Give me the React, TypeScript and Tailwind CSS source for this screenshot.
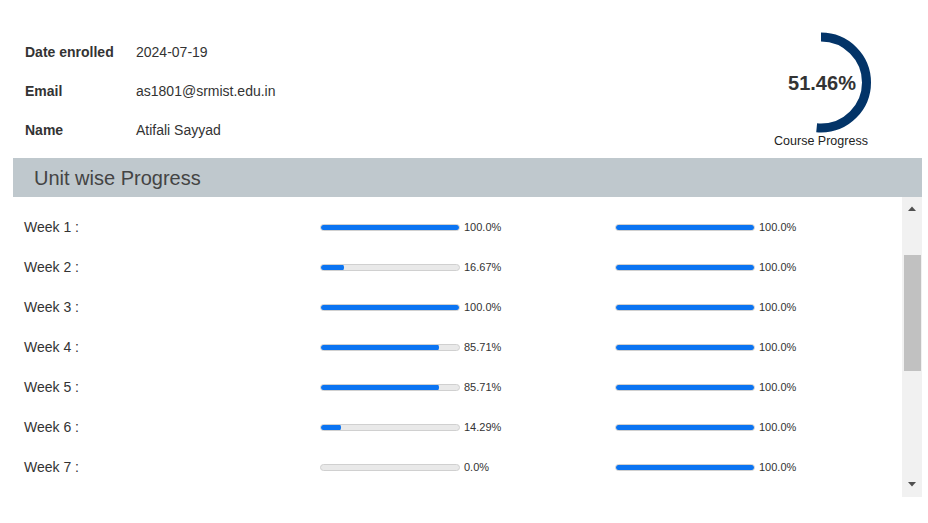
const info = [
  { label: 'Date enrolled', value: '2024-07-19' },
  { label: 'Email', value: 'as1801@srmist.edu.in' },
  { label: 'Name', value: 'Atifali Sayyad' },
];

const weeks = [
  { name: 'Week 1 :', a: 100, b: 100, at: '100.0%', bt: '100.0%' },
  { name: 'Week 2 :', a: 16.67, b: 100, at: '16.67%', bt: '100.0%' },
  { name: 'Week 3 :', a: 100, b: 100, at: '100.0%', bt: '100.0%' },
  { name: 'Week 4 :', a: 85.71, b: 100, at: '85.71%', bt: '100.0%' },
  { name: 'Week 5 :', a: 85.71, b: 100, at: '85.71%', bt: '100.0%' },
  { name: 'Week 6 :', a: 14.29, b: 100, at: '14.29%', bt: '100.0%' },
  { name: 'Week 7 :', a: 0, b: 100, at: '0.0%', bt: '100.0%' },
];

function Bar({ pct, text }: { pct: number; text: string }) {
  return (
    <div className="flex items-center">
      <div className="w-[140px] h-[7px] rounded-full bg-[#e9e9e9] border border-[#d0d0d0] overflow-hidden relative">
        <div className="absolute left-0 top-[-1px] bottom-[-1px] rounded-full bg-[#0b74f2]" style={{ width: `${pct}%` }} />
      </div>
      <span className="ml-[4px] text-[11px] text-[#333]">{text}</span>
    </div>
  );
}

function Donut({ pct }: { pct: number }) {
  const r = 45.5;
  const c = 2 * Math.PI * r;
  return (
    <div className="relative w-[110px] h-[102px]">
      <svg width="110" height="102" viewBox="0 0 110 102">
        <circle
          cx="55"
          cy="50.5"
          r={r}
          fill="none"
          stroke="#033468"
          strokeWidth="9"
          strokeDasharray={`${(c * pct) / 100} ${c}`}
          transform="rotate(-90 55 50.5)"
        />
      </svg>
      <div className="absolute inset-0 flex items-center justify-center pl-[2px] pb-[1px] text-[20px] font-bold text-[#333]">
        {pct}%
      </div>
    </div>
  );
}

export default function App() {
  return (
    <div className="w-[928px] h-[523px] bg-white overflow-hidden font-['Liberation_Sans',Arial,sans-serif] text-[#333] pl-[13px] pr-[6px]">
      <div className="flex h-[158px]">
        <div className="flex-1 pt-[33px] pl-[12px]">
          {info.map((row) => (
            <div key={row.label} className="flex items-center h-[39px] text-[14px]">
              <span className="w-[111px] font-bold">{row.label}</span>
              <span>{row.value}</span>
            </div>
          ))}
        </div>
        <div className="w-[110px] mr-[46px] pt-[32px] flex flex-col items-center">
          <Donut pct={51.46} />
          <div className="text-[12.5px] leading-[14px] text-[#222] whitespace-nowrap">Course Progress</div>
        </div>
      </div>

      <div className="h-[39px] bg-[#bfc8cd] flex items-center pl-[21px]">
        <span className="text-[20px] text-[#444]">Unit wise Progress</span>
      </div>

      <div className="flex h-[300px]">
        <div className="flex-1 overflow-hidden pt-[10px] pl-[11px]">
          {weeks.map((w) => (
            <div key={w.name} className="flex items-center h-[40px]">
              <span className="w-[296px] text-[14px] text-[#333]">{w.name}</span>
              <div className="w-[295px]">
                <Bar pct={w.a} text={w.at} />
              </div>
              <Bar pct={w.b} text={w.bt} />
            </div>
          ))}
        </div>
        <div className="w-[20px] bg-[#f1f1f1] flex flex-col items-center">
          <svg width="10" height="22" viewBox="0 0 10 22">
            <path d="M1 14 L5 9.5 L9 14 Z" fill="#505050" />
          </svg>
          <div className="w-[17px] h-[116px] bg-[#c1c1c1] mt-[36px] ml-[1px]" />
          <div className="flex-1" />
          <svg width="10" height="24" viewBox="0 0 10 24">
            <path d="M1 9 L9 9 L5 13.5 Z" fill="#505050" />
          </svg>
        </div>
      </div>
    </div>
  );
}
